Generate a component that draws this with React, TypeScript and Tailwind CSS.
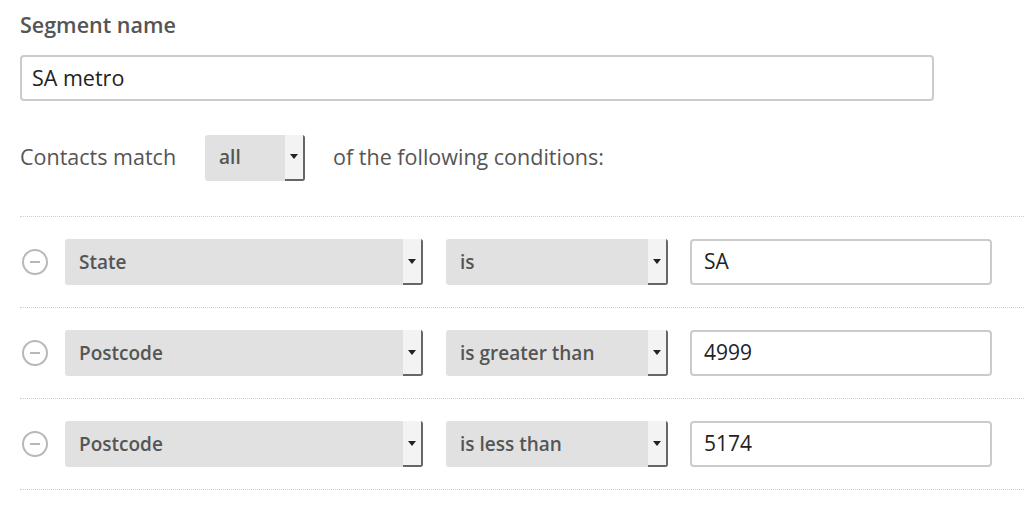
import React from "react";

function Select({ label, width }: { label: string; width: string }) {
  return (
    <div className={`flex h-[46px] ${width} shrink-0 rounded-[3px] overflow-hidden`}>
      <div className="flex flex-1 items-center bg-[#e1e1e1] pl-[14px] text-[19px] font-semibold text-[#555]">
        {label}
      </div>
      <div className="flex w-[20px] items-center justify-center bg-[#f3f3f3] border-r-2 border-b-2 border-[#666] rounded-br-[2px]">
        <svg width="8" height="5" viewBox="0 0 8 5">
          <path d="M0 0h8L4 5z" fill="#222" />
        </svg>
      </div>
    </div>
  );
}

function MinusCircle() {
  return (
    <svg width="28" height="28" viewBox="0 0 28 28" className="shrink-0">
      <circle cx="14" cy="14" r="12" fill="none" stroke="#b8b8b8" strokeWidth="2" />
      <line x1="9" y1="14" x2="19" y2="14" stroke="#b8b8b8" strokeWidth="2" />
    </svg>
  );
}

function Row({ field, op, value }: { field: string; op: string; value: string }) {
  return (
    <div className="flex items-center border-t border-dotted border-[#cfcfcf] py-[22px]">
      <div className="ml-[1px]">
        <MinusCircle />
      </div>
      <div className="ml-[16px]">
        <Select label={field} width="w-[358px]" />
      </div>
      <div className="ml-[23px]">
        <Select label={op} width="w-[222px]" />
      </div>
      <div className="ml-[22px] flex h-[46px] w-[302px] items-center rounded-[4px] border-2 border-[#cbcbcb] pl-[12px] text-[21px] text-[#222]">
        {value}
      </div>
    </div>
  );
}

export default function App() {
  return (
    <div
      className="h-[507px] w-[1024px] overflow-hidden bg-white pl-[20px] pt-[11px]"
      style={{ fontFamily: '"Open Sans", "Noto Sans", sans-serif' }}
    >
      <div className="text-[21.5px] font-semibold leading-[28px] text-[#555]">Segment name</div>
      <div className="mt-[16px] flex h-[46px] w-[914px] items-center rounded-[4px] border-2 border-[#cbcbcb] pl-[10px] text-[21.5px] text-[#222]">
        SA metro
      </div>
      <div className="mt-[33px] flex h-[47px] items-center text-[21.5px] text-[#555]">
        <span>Contacts match</span>
        <div className="ml-[29px]">
          <Select label="all" width="w-[100px]" />
        </div>
        <span className="ml-[28px]">of the following conditions:</span>
      </div>
      <div className="mt-[35px] w-[1004px]">
        <Row field="State" op="is" value="SA" />
        <Row field="Postcode" op="is greater than" value="4999" />
        <Row field="Postcode" op="is less than" value="5174" />
        <div className="border-t border-dotted border-[#cfcfcf]" />
      </div>
    </div>
  );
}
